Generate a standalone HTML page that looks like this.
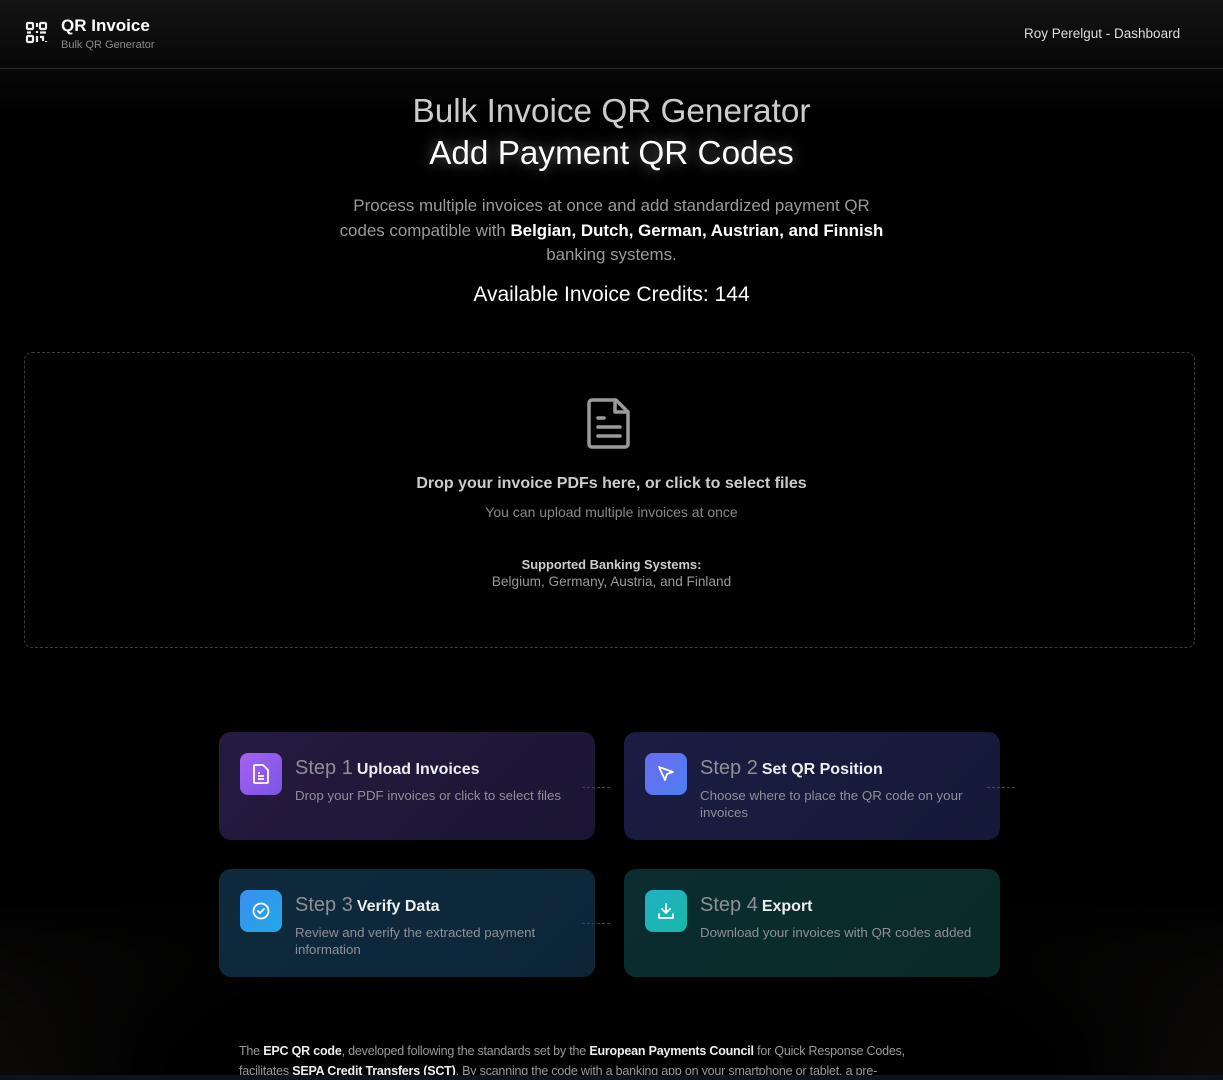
<!DOCTYPE html>
<html><head><meta charset="utf-8"><style>
*{margin:0;padding:0;box-sizing:border-box}
html,body{width:1223px;height:1080px;overflow:hidden;background:#000;font-family:"Liberation Sans",sans-serif;color:#fff}
body{position:relative;background:#000}
.bgtop{position:absolute;left:0;top:0;width:1223px;height:120px;background:linear-gradient(#141414 0,#070707 68px,#000 120px)}
.bgbot{position:absolute;left:0;top:900px;width:1223px;height:180px;background:radial-gradient(ellipse 800px 260px at 50% 100%,#000 55%,transparent 100%),linear-gradient(transparent,#1a1714)}
.a{position:absolute}
.c{position:absolute;left:0;width:1223px;text-align:center}
.card{position:absolute;width:376px;height:108px;border-radius:12px}
.ic{position:absolute;left:21px;top:21px;width:42px;height:42px;border-radius:8px;display:flex;align-items:center;justify-content:center}
.st{position:absolute;left:76px;top:25px;font-size:20px;color:#8f8f95;white-space:nowrap}
.st b{font-size:16px;color:#eee;margin-left:4px}
.ds{position:absolute;left:76px;top:55px;width:285px;font-size:13.3px;line-height:17px;color:#8f8f98}
.dash{position:absolute;width:28px;border-top:1px dashed #444}
</style></head><body>
<div class="bgtop"></div><div class="bgbot"></div>
<div class="a" style="left:0;top:68px;width:1223px;height:1px;background:#2c2c2c"></div>
<svg class="a" style="left:25px;top:21px" width="24" height="24" viewBox="0 0 24 24" fill="none" stroke="#eee" stroke-width="2.2"><rect x="2" y="2" width="6" height="6" rx="1"/><rect x="15" y="2" width="6" height="6" rx="1"/><rect x="2" y="15" width="6" height="6" rx="1"/><path d="M12 2v4M12 10v2M2 11.5h4M15 11.5h6M12 15v6M15 16h3v4M21 16v0M21 20v1"/></svg>
<div class="a" style="left:61px;top:16px;font-size:17px;font-weight:bold">QR Invoice</div>
<div class="a" style="left:61px;top:39px;font-size:11px;color:#888">Bulk QR Generator</div>
<div class="a" style="left:1024px;top:26px;font-size:13.5px;color:#ddd">Roy Perelgut - Dashboard</div>

<div class="c" style="top:93px;font-size:33.3px;color:#ccc">Bulk Invoice QR Generator</div>
<div class="c" style="top:135px;font-size:33.3px;color:#fff;text-shadow:0 0 14px rgba(255,255,255,.45)">Add Payment QR Codes</div>
<div class="c" style="top:194px;font-size:16.9px;line-height:24.5px;color:#9a9a9a">Process multiple invoices at once and add standardized payment QR<br>codes compatible with <b style="color:#fff">Belgian, Dutch, German, Austrian, and Finnish</b><br>banking systems.</div>
<div class="c" style="top:283px;font-size:21px;color:#fff">Available Invoice Credits: 144</div>

<div class="a" style="left:24px;top:352px;width:1171px;height:296px;border:1px dashed #3d3d3d;border-radius:8px"></div>
<svg class="a" style="left:586px;top:396px" width="48" height="54" viewBox="0 0 48 54" fill="none" stroke="#9a9a9a" stroke-width="3.5" stroke-linejoin="round" stroke-linecap="round"><path d="M6 4h24l12 12v32a3 3 0 0 1-3 3H6a3 3 0 0 1-3-3V7a3 3 0 0 1 3-3z"/><path d="M29 4v12h13"/><path d="M12 22h6M12 31h22M12 40h22"/></svg>
<div class="c" style="top:475px;font-size:16px;font-weight:bold;color:#ccc">Drop your invoice PDFs here, or click to select files</div>
<div class="c" style="top:504px;font-size:14px;color:#888">You can upload multiple invoices at once</div>
<div class="c" style="top:557px;font-size:12.9px;font-weight:bold;color:#ccc">Supported Banking Systems:</div>
<div class="c" style="top:574px;font-size:13.6px;color:#999">Belgium, Germany, Austria, and Finland</div>

<div class="card" style="left:219px;top:732px;background:linear-gradient(135deg,#261a40,#1b1533)">
<div class="ic" style="background:linear-gradient(135deg,#a561f0,#7b55e6)"><svg width="18" height="20" viewBox="0 0 18 20" fill="none" stroke="#fff" stroke-width="1.8" stroke-linejoin="round"><path d="M3 1h8l5 5v12a1 1 0 0 1-1 1H3a1 1 0 0 1-1-1V2a1 1 0 0 1 1-1z"/><path d="M6 9h2M6 12h6M6 15h6"/></svg></div>
<div class="st">Step 1<b>Upload Invoices</b></div><div class="ds">Drop your PDF invoices or click to select files</div></div>
<div class="dash" style="left:582px;top:787px"></div>
<div class="card" style="left:624px;top:732px;background:linear-gradient(135deg,#1a1d42,#141a38)">
<div class="ic" style="background:linear-gradient(135deg,#6a6cf2,#4f7ef0)"><svg width="20" height="20" viewBox="0 0 20 20" fill="none" stroke="#fff" stroke-width="1.8" stroke-linejoin="round"><path d="M3 3l14 5-6 2-2 6z"/></svg></div>
<div class="st">Step 2<b>Set QR Position</b></div><div class="ds">Choose where to place the QR code on your invoices</div></div>
<div class="dash" style="left:987px;top:787px"></div>
<div class="card" style="left:219px;top:869px;background:linear-gradient(135deg,#0f2a3d,#0c2638)">
<div class="ic" style="background:linear-gradient(135deg,#3a8ef0,#22a8e6)"><svg width="20" height="20" viewBox="0 0 20 20" fill="none" stroke="#fff" stroke-width="1.8" stroke-linecap="round"><circle cx="10" cy="10" r="7.5"/><path d="M7 10l2 2 4-4"/></svg></div>
<div class="st">Step 3<b>Verify Data</b></div><div class="ds">Review and verify the extracted payment information</div></div>
<div class="dash" style="left:582px;top:923px"></div>
<div class="card" style="left:624px;top:869px;background:linear-gradient(135deg,#0b2d31,#0a2a27)">
<div class="ic" style="background:linear-gradient(135deg,#22b0c4,#17b8a8)"><svg width="20" height="20" viewBox="0 0 20 20" fill="none" stroke="#fff" stroke-width="1.8" stroke-linecap="round" stroke-linejoin="round"><path d="M10 3v9M6 8l4 4 4-4M3 13v4h14v-4"/></svg></div>
<div class="st">Step 4<b>Export</b></div><div class="ds">Download your invoices with QR codes added</div></div>

<div class="a" style="left:239px;top:1041px;width:700px;font-size:12.5px;line-height:20px;color:#999;letter-spacing:-.2px">The <b style="color:#eee">EPC QR code</b>, developed following the standards set by the <b style="color:#eee">European Payments Council</b> for Quick Response Codes, facilitates <b style="color:#eee">SEPA Credit Transfers (SCT)</b>. By scanning the code with a banking app on your smartphone or tablet, a pre-</div>
<div class="a" style="left:0;top:1075px;width:1223px;height:5px;background:#0c1220"></div>
</body></html>
